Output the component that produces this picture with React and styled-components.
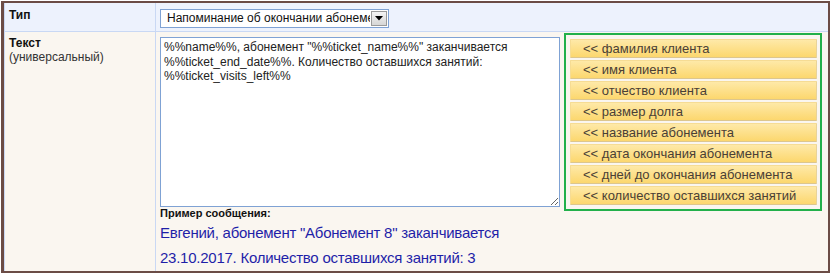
import React from "react";
import styled, { createGlobalStyle } from "styled-components";

const Global = createGlobalStyle`
  html, body { margin: 0; padding: 0; background: #ffffff; }
  body { font-family: "Liberation Sans", Arial, sans-serif; font-size: 12px; color: #222; }
`;

const Frame = styled.div`
  box-sizing: border-box;
  margin: 1px 0 0 1px;
  width: 829px;
  border: 2px solid #6b4c46;
  border-left-width: 3px;
  box-shadow: 0 1px 0 #c9d8f4;
`;

const Grid = styled.div`
  display: grid;
  grid-template-columns: 150px 1fr;
  grid-template-rows: 28px auto;
  gap: 1px;
  padding-left: 1px;
  background: #c9d8f4;
`;

const Cell = styled.div`
  background: ${(p) => (p.$head ? "#edf2fd" : "#faf6f0")};
  padding: ${(p) => p.$pad};
  box-sizing: border-box;
  min-width: 0;
`;

const Label = styled.div`
  font-weight: bold;
  font-size: 12px;
  line-height: 14px;
  color: #111;
`;

const Hint = styled.div`
  font-size: 12px;
  line-height: 14px;
  color: #333;
`;

const Select = styled.div`
  box-sizing: border-box;
  width: 229px;
  height: 19px;
  border: 1px solid #7fa2d4;
  background: #fff;
  display: flex;
  align-items: stretch;
`;

const SelectText = styled.div`
  flex: 1;
  overflow: hidden;
  white-space: nowrap;
  padding-left: 6px;
  font-size: 12px;
  line-height: 17px;
  color: #111;
`;

const SelectBtn = styled.div`
  width: 16px;
  box-sizing: border-box;
  margin: 1px;
  border: 1px solid #9a9a9a;
  background: linear-gradient(#f4f4f4, #d6d6d6);
  display: flex;
  align-items: center;
  justify-content: center;
`;

const Editor = styled.div`
  display: grid;
  grid-template-columns: 400px 258px;
  column-gap: 4px;
  align-items: start;
`;

const TextArea = styled.textarea`
  box-sizing: border-box;
  width: 400px;
  height: 170px;
  margin: 5px 0 0 0;
  display: block;
  border: 1px solid #7fa2d4;
  padding: 2px 3px;
  font-family: "Liberation Sans", Arial, sans-serif;
  font-size: 12px;
  line-height: 14.5px;
  color: #222;
  background: #fff;
  outline: none;
  resize: both;
`;

const Macros = styled.div`
  grid-column: 2;
  grid-row: 1 / span 2;
  margin-top: 1px;
  box-sizing: border-box;
  border: 2px solid #22b04b;
  padding: 4px 3px 4px 4px;
  display: flex;
  flex-direction: column;
  gap: 2px;
`;

const MacroBtn = styled.button`
  box-sizing: border-box;
  height: 19px;
  width: 100%;
  text-align: left;
  padding: 0 0 0 12px;
  margin: 0;
  border: 1px solid #f6dc94;
  border-bottom-color: #dcc68e;
  border-right-color: #e8d39a;
  border-radius: 1px;
  background: linear-gradient(#fee9a8, #fcd76e);
  font-family: "Liberation Sans", Arial, sans-serif;
  font-size: 13px;
  line-height: 17px;
  color: #4a3f36;
  cursor: pointer;
`;

const Example = styled.div`
  grid-column: 1;
  padding-bottom: 1px;
`;

const ExampleTitle = styled.div`
  font-weight: bold;
  font-size: 11px;
  line-height: 13px;
  color: #111;
`;

const ExampleText = styled.div`
  font-size: 15px;
  letter-spacing: -0.25px;
  line-height: 25px;
  color: #1f1fa8;
`;

const macros = [
  "фамилия клиента",
  "имя клиента",
  "отчество клиента",
  "размер долга",
  "название абонемента",
  "дата окончания абонемента",
  "дней до окончания абонемента",
  "количество оставшихся занятий",
];

export default function App() {
  return (
    <>
      <Global />
      <Frame>
        <Grid>
          <Cell $head $pad="5px 4px">
            <Label>Тип</Label>
          </Cell>
          <Cell $head $pad="6px 4px 3px 4px">
            <Select>
              <SelectText>Напоминание об окончании абонемента</SelectText>
              <SelectBtn>
                <svg width="8" height="5" viewBox="0 0 8 5">
                  <path d="M0 0 H8 L4 4.5 Z" fill="#000" />
                </svg>
              </SelectBtn>
            </Select>
          </Cell>
          <Cell $pad="4px 4px">
            <Label>Текст</Label>
            <Hint>(универсальный)</Hint>
          </Cell>
          <Cell $pad="0 5px 0 4px">
            <Editor>
              <TextArea
                defaultValue={
                  '%%name%%, абонемент "%%ticket_name%%" заканчивается %%ticket_end_date%%. Количество оставшихся занятий: %%ticket_visits_left%%'
                }
              />
              <Macros>
                {macros.map((m) => (
                  <MacroBtn key={m} type="button">
                    {"<< " + m}
                  </MacroBtn>
                ))}
              </Macros>
              <Example>
                <ExampleTitle>Пример сообщения:</ExampleTitle>
                <ExampleText>
                  Евгений, абонемент "Абонемент 8" заканчивается 23.10.2017. Количество оставшихся занятий: 3
                </ExampleText>
              </Example>
            </Editor>
          </Cell>
        </Grid>
      </Frame>
    </>
  );
}
